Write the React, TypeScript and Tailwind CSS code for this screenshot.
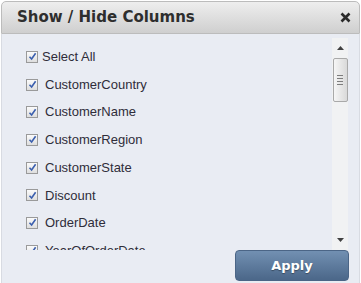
import React from 'react';

const columns = [
  'CustomerCountry',
  'CustomerName',
  'CustomerRegion',
  'CustomerState',
  'Discount',
  'OrderDate',
  'YearOfOrderDate',
];

const Check = () => (
  <span className="w-[12px] h-[12px] shrink-0 border border-[#9a9a9a] bg-gradient-to-b from-[#fbfbfb] to-[#dedede] flex items-center justify-center">
    <svg width="9" height="9" viewBox="0 0 9 9">
      <path d="M1.5 4.8 L3.6 7 L7.6 1.2" fill="none" stroke="#3b5fae" strokeWidth="1.6" />
    </svg>
  </span>
);

const App = () => {
  return (
    <div className="w-[361px] h-[283px] bg-white pt-px px-px overflow-hidden">
      {/* Header */}
      <div className="h-[33px] flex items-center justify-between pl-[15px] pr-[8px] rounded-t-[5px] border border-[#bcbcbc] bg-gradient-to-b from-[#eeeeee] to-[#cfcfcf]">
        <h2 className="text-[15px] font-bold text-[#2e2e2e] font-['DejaVu_Sans',sans-serif]">
          Show / Hide Columns
        </h2>
        <svg width="11" height="11" viewBox="0 0 11 11">
          <path d="M1.5 1.5 L9.5 9.5 M9.5 1.5 L1.5 9.5" stroke="#2a2a2a" strokeWidth="2.6" />
        </svg>
      </div>

      {/* Body */}
      <div className="h-[249px] bg-[#e9ecf3] border-x border-[#d8dbe2] flex flex-col">
        <div className="flex pt-[4px] pr-[11px] h-[216px]">
          <ul className="flex-1 overflow-hidden pl-[24px] pt-[5px] font-['Liberation_Sans',Arial,sans-serif] text-[13px] text-[#2f2d3a]">
            <li className="h-[27.7px] flex items-center gap-[4px]">
              <Check />
              <span>Select All</span>
            </li>
            {columns.map((c) => (
              <li key={c} className="h-[27.7px] flex items-center gap-[7px]">
                <Check />
                <span>{c}</span>
              </li>
            ))}
          </ul>

          {/* Scrollbar */}
          <div className="w-[16px] bg-[#f1f2f3] flex flex-col items-center">
            <svg width="7" height="4" viewBox="0 0 7 4" className="mt-[8px]">
              <path d="M0 4 L3.5 0 L7 4 Z" fill="#404040" />
            </svg>
            <div className="mt-[8px] w-[15px] h-[44px] rounded-[2px] border border-[#a9a9a9] bg-gradient-to-r from-[#f6f6f6] to-[#d9d9d9] flex flex-col items-center justify-center gap-[2px]">
              <span className="w-[6px] h-px bg-[#7d7d7d]" />
              <span className="w-[6px] h-px bg-[#7d7d7d]" />
              <span className="w-[6px] h-px bg-[#7d7d7d]" />
              <span className="w-[6px] h-px bg-[#7d7d7d]" />
            </div>
            <svg width="7" height="4" viewBox="0 0 7 4" className="mt-auto mb-[8px]">
              <path d="M0 0 L3.5 4 L7 0 Z" fill="#404040" />
            </svg>
          </div>
        </div>

        {/* Footer */}
        <div className="flex justify-end pr-[10px]">
          <button className="w-[114px] h-[31px] rounded-[4px] border border-[#4b6586] bg-gradient-to-b from-[#7290b2] to-[#4b6789] text-white font-bold text-[13px] font-['DejaVu_Sans',sans-serif] [text-shadow:0_1px_1px_rgba(0,0,0,0.35)]">
            Apply
          </button>
        </div>
      </div>
    </div>
  );
};

export default App;
